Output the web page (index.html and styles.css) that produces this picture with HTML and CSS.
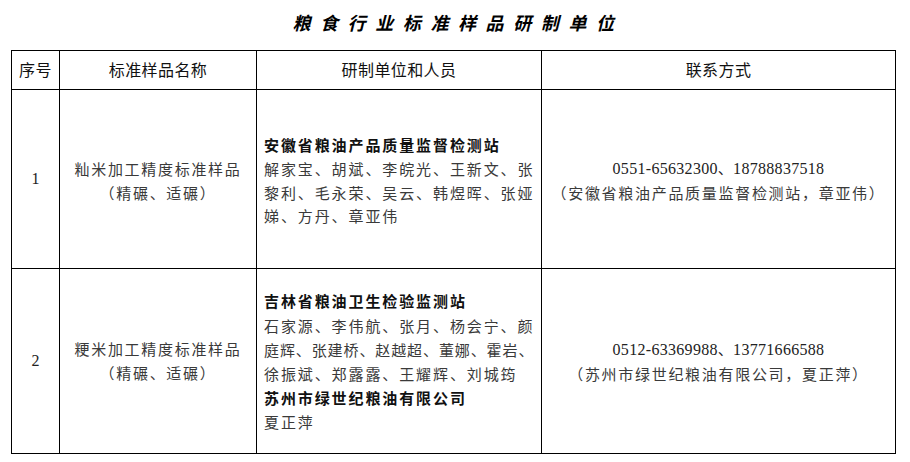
FILE: index.html
```html
<!DOCTYPE html>
<html lang="zh-CN">
<head>
<meta charset="utf-8">
<title>粮食行业标准样品研制单位</title>
<link rel="stylesheet" href="styles.css">
</head>
<body>
<div class="page">
  <h1 class="title">粮食行业标准样品研制单位</h1>
  <div class="grid">
    <div class="cell head">序号</div>
    <div class="cell head">标准样品名称</div>
    <div class="cell head">研制单位和人员</div>
    <div class="cell head">联系方式</div>

    <div class="cell row1 num">1</div>
    <div class="cell row1 center"><div class="lines"><div>籼米加工精度标准样品</div><div>（精碾、适碾）</div></div></div>
    <div class="cell row1 left"><div class="lines">
      <div class="org">安徽省粮油产品质量监督检测站</div>
      <div>解家宝、胡斌、李皖光、王新文、张</div>
      <div>黎利、毛永荣、吴云、韩煜晖、张娅</div>
      <div>娣、方丹、章亚伟</div>
    </div></div>
    <div class="cell row1 center"><div class="lines"><div class="phone">0551-65632300<span class="cjk">、</span>18788837518</div><div>（安徽省粮油产品质量监督检测站，章亚伟）</div></div></div>

    <div class="cell row2 num">2</div>
    <div class="cell row2 center"><div class="lines"><div>粳米加工精度标准样品</div><div>（精碾、适碾）</div></div></div>
    <div class="cell row2 left"><div class="lines lines2">
      <div class="org">吉林省粮油卫生检验监测站</div>
      <div>石家源、李伟航、张月、杨会宁、颜</div>
      <div class="tight">庭辉、张建桥、赵越超、董娜、霍岩、</div>
      <div>徐振斌、郑露露、王耀辉、刘城筠</div>
      <div class="org">苏州市绿世纪粮油有限公司</div>
      <div>夏正萍</div>
    </div></div>
    <div class="cell row2 center"><div class="lines"><div class="phone">0512-63369988<span class="cjk">、</span>13771666588</div><div>（苏州市绿世纪粮油有限公司，夏正萍）</div></div></div>
  </div>
</div>
</body>
</html>
```

FILE: styles.css
```css
* { box-sizing: border-box; }
html, body { margin: 0; padding: 0; background: #fff; }
body {
  font-family: "Noto Sans CJK SC", "Liberation Serif", sans-serif;
  color: #333;
  width: 910px;
  height: 462px;
  overflow: hidden;
}
.page { padding: 0; }
.title {
  margin: 0;
  height: 50px;
  display: flex;
  align-items: center;
  justify-content: center;
  padding: 0 0 7px 6px;
  font-size: 18px;
  font-weight: 700;
  font-style: italic;
  letter-spacing: 9.6px;
  color: #000;
}
.grid {
  margin-left: 11px;
  width: 885px;
  display: grid;
  grid-template-columns: 49px 197px 285px 354px;
  grid-template-rows: 39px 179px 185px;
  border-top: 1px solid #000;
}
.cell {
  border-right: 1px solid #000;
  border-bottom: 1px solid #000;
  display: flex;
  align-items: center;
  font-size: 15px;
}
.cell:nth-child(4n+1) { border-left: 1px solid #000; }
.head {
  justify-content: center;
  font-size: 16px;
  color: #111;
  letter-spacing: 0.4px;
  padding-bottom: 2px;
}
.num {
  justify-content: center;
  font-family: "Liberation Serif", serif;
  font-size: 16px;
  color: #222;
}
.center { justify-content: center; text-align: center; }
.left { justify-content: flex-start; padding-left: 7px; }
.lines { line-height: 24px; letter-spacing: 1.7px; white-space: nowrap; color: #3a3a3a; }
.row1 .lines { margin-top: 3px; }
.left .lines { letter-spacing: 1.9px; line-height: 23.7px; }
.left .lines2 { line-height: 24.2px; margin-top: 2px; }
.left .tight { letter-spacing: 0.9px; }
.org { font-weight: 700; color: #111; letter-spacing: 1.9px; }
.phone {
  font-family: "Liberation Serif", serif;
  font-size: 16px;
  letter-spacing: 0.3px;
  color: #222;
}
.phone .cjk { font-family: "Noto Sans CJK SC", sans-serif; font-size: 15px; }
```
